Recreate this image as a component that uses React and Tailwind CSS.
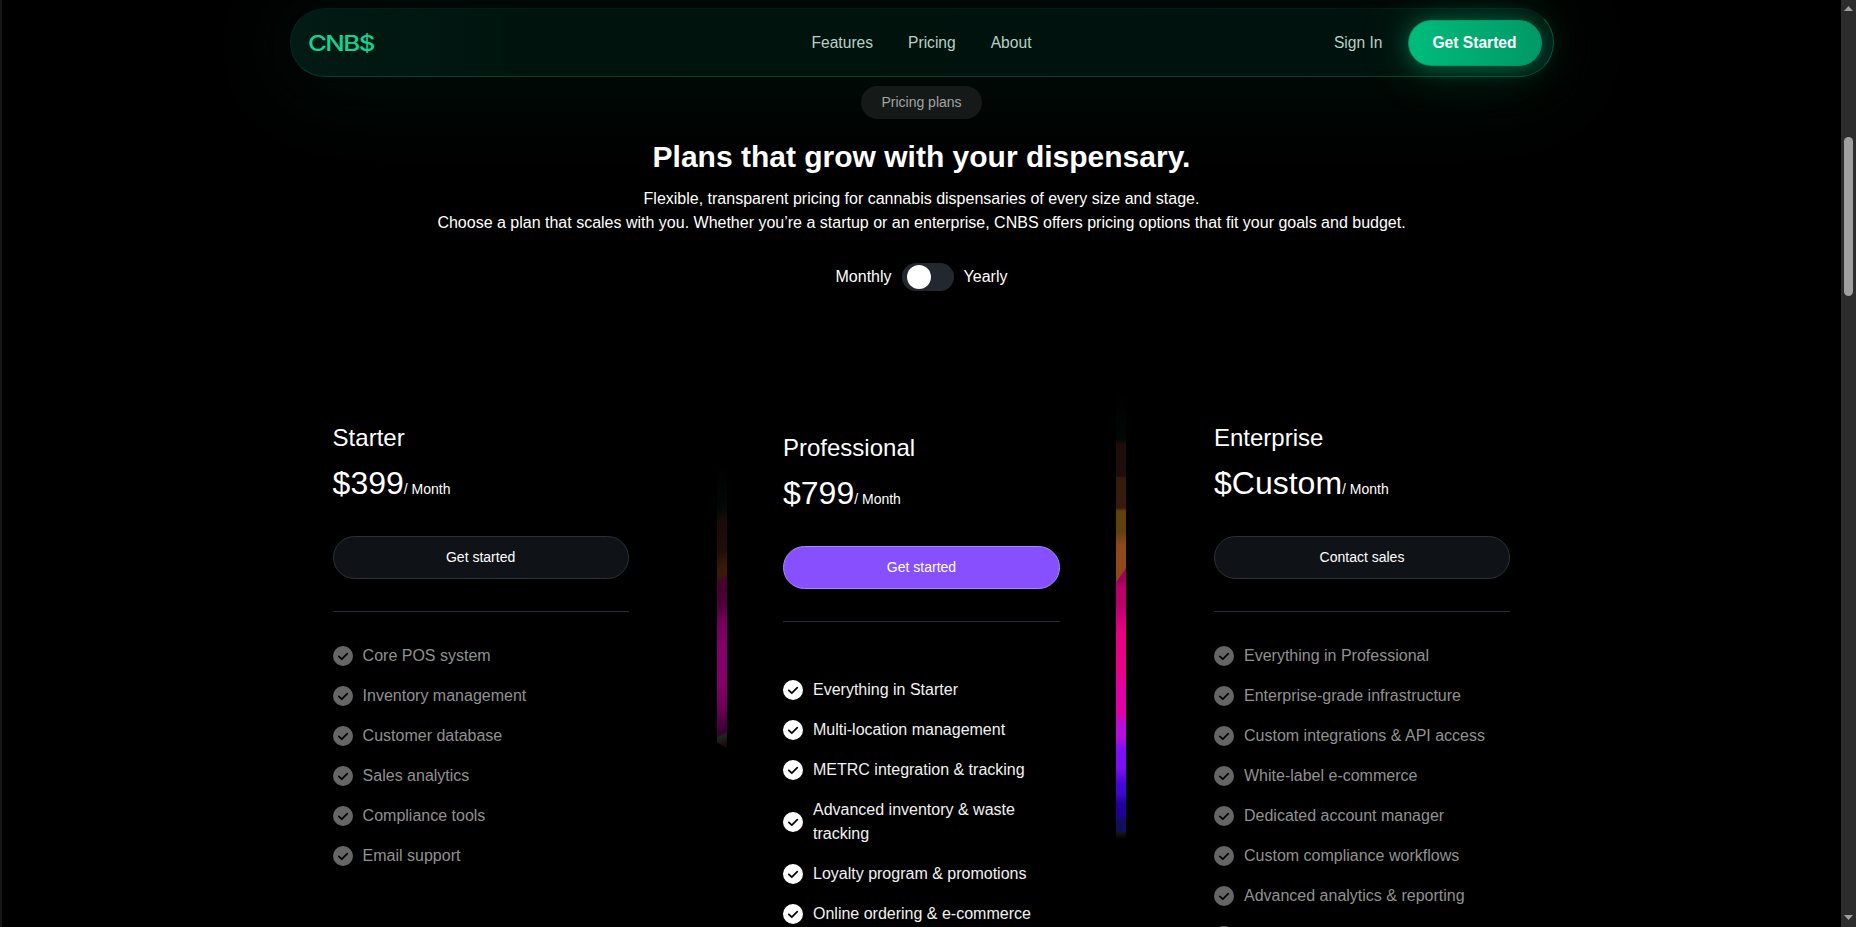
const plans = [
  {
    name: "Starter",
    price: "$399",
    cta: "Get started",
    features: [
      "Core POS system",
      "Inventory management",
      "Customer database",
      "Sales analytics",
      "Compliance tools",
      "Email support",
    ],
  },
  {
    name: "Professional",
    price: "$799",
    cta: "Get started",
    featured: true,
    features: [
      "Everything in Starter",
      "Multi-location management",
      "METRC integration & tracking",
      "Advanced inventory & waste tracking",
      "Loyalty program & promotions",
      "Online ordering & e-commerce",
    ],
  },
  {
    name: "Enterprise",
    price: "$Custom",
    cta: "Contact sales",
    features: [
      "Everything in Professional",
      "Enterprise-grade infrastructure",
      "Custom integrations & API access",
      "White-label e-commerce",
      "Dedicated account manager",
      "Custom compliance workflows",
      "Advanced analytics & reporting",
      "",
    ],
  },
];

function CheckIcon({ className }) {
  return (
    <svg viewBox="0 0 20 20" className={`size-5 shrink-0 ${className}`}>
      <circle cx="10" cy="10" r="10" fill="currentColor" />
      <path d="M5.8 10.4 8.8 13.2 14.3 7.7" fill="none" stroke="#000" strokeWidth="1.7" strokeLinecap="round" strokeLinejoin="round" />
    </svg>
  );
}

function Logo() {
  return (
    <span className="mt-[2px] ml-[6px] inline-block origin-left scale-x-[1.2] font-['Inter',sans-serif] text-[21.5px] font-medium tracking-[-1.3px] text-[#12d393]">
      CNB$
    </span>
  );
}

function Plan({ plan }) {
  const f = plan.featured;
  return (
    <article className={f ? "w-[277px] shrink-0 pt-[10px]" : "w-[296px] shrink-0"}>
      <h3 className="text-2xl leading-8">{plan.name}</h3>
      <p className="mt-[5px] flex h-12 items-baseline leading-[48px]">
        <span className="text-[32px]">{plan.price}</span>
        <span className="text-sm">/ Month</span>
      </p>
      <button
        className={`mt-[29px] flex h-[43px] w-full items-center justify-center rounded-full border pb-px text-sm ${
          f ? "border-[#a58cf8] bg-[#864fff]" : "border-[#2a3238] bg-[#0f1216]"
        }`}
      >
        {plan.cta}
      </button>
      <div className="mt-8 h-px bg-[#262b33]" />
      <ul className={`flex flex-col gap-4 ${f ? "mt-14 text-[#f2f2f2]" : "mt-8 text-[#919191]"}`}>
        {plan.features.map((text, i) => (
          <li key={i} className="flex min-h-6 items-center gap-[10px]">
            <CheckIcon className={f ? "text-white" : "text-[#666666]"} />
            <span className="leading-6">{text}</span>
          </li>
        ))}
      </ul>
    </article>
  );
}

export default function App() {
  return (
    <div className="flex h-[927px] w-full overflow-hidden bg-black font-['Liberation_Sans',Arial,sans-serif] text-base text-white">
      <div className="w-[2px] shrink-0 bg-[#171717]" />
      <main className="flex min-w-0 flex-1 flex-col items-center overflow-hidden pt-2">
        <nav className="grid h-[69px] w-[1264px] shrink-0 grid-cols-[1fr_auto_1fr] items-center rounded-full border border-t-[#021f17] border-r-[#07503a] border-b-[#04402d] border-l-[#042a20] bg-linear-to-r from-[#021b14] via-[#00130d] via-20% to-[#00120d] px-[11px] text-[15.6px] shadow-[0_4px_24px_rgba(0,0,0,0.3),0_4px_90px_10px_rgba(0,188,125,0.1)]">
          <Logo />
          <div className="flex gap-[35px] text-[#b9d0c8]">
            <a>Features</a>
            <a>Pricing</a>
            <a>About</a>
          </div>
          <div className="flex items-center justify-end gap-[25px]">
            <a className="text-[#b9d0c8]">Sign In</a>
            <button className="flex h-[46px] w-[134px] items-center justify-center rounded-full border border-[#059669] bg-linear-to-r from-[#00bc7d] to-[#009966] font-bold shadow-[0_2px_20px_rgba(0,188,125,0.4),0_0_50px_rgba(0,188,125,0.28)]">
              Get Started
            </button>
          </div>
        </nav>
        <div className="z-10 mt-[9px] flex h-[33px] w-[121px] shrink-0 items-center justify-center rounded-full bg-[#151a18] pb-px text-sm text-[#a3a3a3]">
          Pricing plans
        </div>
        <h1 className="mt-5 text-[30px] leading-9 font-bold">Plans that grow with your dispensary.</h1>
        <p className="mt-3 text-center leading-6">
          Flexible, transparent pricing for cannabis dispensaries of every size and stage.
          <br />
          Choose a plan that scales with you. Whether you’re a startup or an enterprise, CNBS offers pricing options that fit your goals and budget.
        </p>
        <div className="mt-7 flex h-7 items-center gap-[10px]">
          <span>Monthly</span>
          <div className="flex h-7 w-[52px] items-center rounded-full bg-[#232830] pl-[5px]">
            <div className="size-6 rounded-full bg-white" />
          </div>
          <span>Yearly</span>
        </div>
        <section className="mt-[101px] flex shrink-0 items-start">
          <div className="mt-[30px] -ml-[0.4px]">
            <Plan plan={plans[0]} />
          </div>
          <div className="mt-[74px] mr-14 ml-[88.4px] h-[282px] w-[10px] bg-[linear-gradient(155deg,transparent_0%,#020806_15%,#1a0b08_20%,#1f0d08_30%,#38190a_36%,#3a1b08_39%,#47002f_41%,#4c0033_48%,#70005a_55%,#820069_63%,#820069_77%,#6b0055_85%,#3a0030_94%,#222_95%,#1c1010_98%,#0a0606_100%)] [clip-path:polygon(0_0,100%_0,100%_100%,0_98%)]" />
          <div className="mt-[30px]">
            <Plan plan={plans[1]} />
          </div>
          <div className="mr-[88px] ml-14 h-[447px] w-[10px] bg-[linear-gradient(to_bottom,transparent_0px,#020806_48px,#1e0d0a_52px,#1e0d0a_84px,#371a0e_86px,#371a0e_116px,#614010_119px,#614010_140px,#8f481c_154px,#90481b_180px,#a0055c_189px,#bc006a_197px,#bc006a_213px,#e80082_240px,#e80085_275px,#e000aa_302px,#df00aa_322px,#b80ddc_332px,#b80ddc_345px,#8010f5_357px,#7d10f5_376px,#4408d5_392px,#4008cc_402px,#20009a_412px,#20009a_422px,#101058_430px,#101058_439px,#151515_441px,transparent_447px)]">
            <div className="h-[190px] w-full pt-[176px]">
              <div className="h-[14px] bg-[linear-gradient(to_bottom_right,#90481b_48%,#a0005c_54%)]" />
            </div>
          </div>
          <div className="mt-[30px]">
            <Plan plan={plans[2]} />
          </div>
        </section>
      </main>
      <aside className="flex w-[15px] shrink-0 flex-col items-center bg-[#2c2c2c]">
        <svg viewBox="0 0 9 5" className="mt-[6px] h-[5px] w-[9px]">
          <path d="M0 5 4.5 0 9 5Z" fill="#9f9f9f" />
        </svg>
        <div className="mt-[126px] h-[159px] w-[9px] rounded-full bg-[#9f9f9f]" />
        <svg viewBox="0 0 9 5" className="mt-auto mb-[7px] h-[5px] w-[9px]">
          <path d="M0 0 4.5 5 9 0Z" fill="#9f9f9f" />
        </svg>
      </aside>
    </div>
  );
}
